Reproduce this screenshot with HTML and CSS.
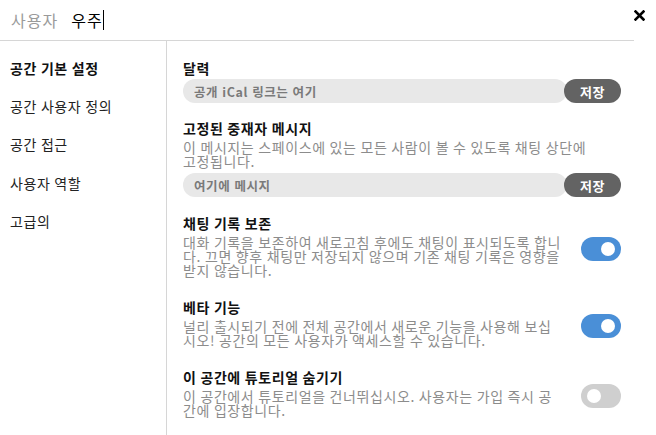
FILE: index.html
```html
<!DOCTYPE html>
<html lang="ko">
<head>
    <meta charset="UTF-8">
    <meta name="viewport" content="width=device-width, initial-scale=1.0">
    <title>공간 설정</title>
    <link rel="stylesheet" href="styles.css">
</head>
<body>
    <header class="top">
        <div class="search">
            <span class="search-label">사용자</span>
            <span class="search-query">우주</span><span class="caret"></span>
        </div>
        <button class="close" aria-label="닫기">
            <svg width="11" height="11" viewBox="0 0 11 11">
                <path d="M1.5 1.5 L9.5 9.5 M9.5 1.5 L1.5 9.5" stroke="#000" stroke-width="2.6" stroke-linecap="square"/>
            </svg>
        </button>
    </header>

    <div class="layout">
        <nav class="sidebar">
            <a class="nav-item active">공간 기본 설정</a>
            <a class="nav-item">공간 사용자 정의</a>
            <a class="nav-item">공간 접근</a>
            <a class="nav-item">사용자 역할</a>
            <a class="nav-item">고급의</a>
        </nav>

        <main class="main">
            <section class="setting first">
                <h3 class="setting-title">달력</h3>
                <div class="field">
                    <input type="text" placeholder="공개 iCal 링크는 여기">
                    <button class="save">저장</button>
                </div>
            </section>

            <section class="setting">
                <h3 class="setting-title">고정된 중재자 메시지</h3>
                <p class="desc wide">이 메시지는 스페이스에 있는 모든 사람이 볼 수 있도록 채팅 상단에 고정됩니다.</p>
                <div class="field">
                    <input type="text" placeholder="여기에 메시지">
                    <button class="save">저장</button>
                </div>
            </section>

            <section class="setting toggle-row history">
                <div class="setting-text">
                    <h3 class="setting-title">채팅 기록 보존</h3>
                    <p class="desc">대화 기록을 보존하여 새로고침 후에도 채팅이 표시되도록 합니다. 끄면 향후 채팅만 저장되지 않으며 기존 채팅 기록은 영향을 받지 않습니다.</p>
                </div>
                <span class="toggle on"></span>
            </section>

            <section class="setting toggle-row beta">
                <div class="setting-text">
                    <h3 class="setting-title">베타 기능</h3>
                    <p class="desc">널리 출시되기 전에 전체 공간에서 새로운 기능을 사용해 보십시오! 공간의 모든 사용자가 액세스할 수 있습니다.</p>
                </div>
                <span class="toggle on"></span>
            </section>

            <section class="setting toggle-row tutorial">
                <div class="setting-text">
                    <h3 class="setting-title">이 공간에 튜토리얼 숨기기</h3>
                    <p class="desc">이 공간에서 튜토리얼을 건너뛰십시오. 사용자는 가입 즉시 공간에 입장합니다.</p>
                </div>
                <span class="toggle"></span>
            </section>
        </main>
    </div>
</body>
</html>
```

FILE: styles.css
```css
* {
    margin: 0;
    padding: 0;
    box-sizing: border-box;
}

body {
    font-family: "Noto Sans CJK KR", "Noto Sans", sans-serif;
    background: #fff;
    color: #111;
    width: 656px;
    height: 435px;
    overflow: hidden;
    letter-spacing: 0.6px;
    word-spacing: -0.6px;
}

.top {
    position: relative;
}

.search {
    width: 634px;
    height: 41px;
    border-bottom: 1px solid #d6d6d6;
    display: flex;
    align-items: center;
    padding-left: 11px;
    font-size: 16px;
    line-height: 20px;
    letter-spacing: 1px;
}

.search-label {
    color: #9a9a9a;
    margin-right: 13px;
}

.search-query {
    color: #000;
}

.caret {
    display: inline-block;
    width: 1px;
    height: 20px;
    background: #000;
}

.close {
    position: absolute;
    top: 10px;
    right: 11px;
    border: none;
    background: none;
    width: 11px;
    height: 11px;
    display: flex;
    cursor: pointer;
}

.layout {
    display: flex;
    height: 394px;
}

.sidebar {
    width: 167px;
    border-right: 1px solid #d6d6d6;
    padding-top: 17px;
    display: flex;
    flex-direction: column;
}

.nav-item {
    display: block;
    padding-left: 10px;
    font-size: 14px;
    line-height: 20px;
    height: 38.2px;
    color: #222;
    cursor: pointer;
}

.nav-item.active {
    font-weight: bold;
    color: #111;
}

.main {
    padding-left: 16px;
    padding-top: 18px;
    width: 454px;
}

.setting {
    margin-top: 16px;
}

.setting.first {
    margin-top: 0;
}

.setting-title {
    font-size: 14px;
    line-height: 18px;
    font-weight: bold;
    color: #111;
}

.desc {
    font-size: 14px;
    line-height: 14px;
    color: #8c8c8c;
    margin-top: 3px;
}

.desc.wide {
    width: 418px;
}

.field {
    display: flex;
    margin-top: 2px;
    height: 24px;
}

.desc + .field {
    margin-top: 5px;
}

.field input {
    flex: 1;
    border: none;
    outline: none;
    background: #e8e8e8;
    border-radius: 12px;
    padding-left: 11px;
    font-family: inherit;
    font-size: 12.5px;
    font-weight: bold;
    letter-spacing: 0.6px;
    color: #555;
}

.field input::placeholder {
    color: #7a7a7a;
}

.save {
    width: 57px;
    margin-left: -3px;
    border: none;
    border-radius: 12px;
    background: #636363;
    color: #fff;
    font-family: inherit;
    font-size: 13px;
    font-weight: bold;
    letter-spacing: 0.5px;
    cursor: pointer;
}

.toggle-row {
    display: flex;
    align-items: center;
}

.field + .toggle-row,
.toggle-row {
    margin-top: 17px;
}

.toggle-row + .toggle-row {
    margin-top: 21px;
}

.setting-text {
    width: 391px;
}

.beta .setting-text {
    width: 375px;
}

.tutorial .setting-text {
    width: 378px;
}

.toggle {
    position: relative;
    width: 40px;
    height: 24px;
    margin-left: auto;
    margin-top: 7px;
    border-radius: 12px;
    background: #cfcfcf;
    flex-shrink: 0;
}

.toggle::after {
    content: "";
    position: absolute;
    top: 5px;
    left: 6px;
    width: 14px;
    height: 14px;
    border-radius: 50%;
    background: #fff;
}

.toggle.on {
    background: #4a8fd7;
}

.toggle.on::after {
    left: auto;
    right: 6px;
}
```
